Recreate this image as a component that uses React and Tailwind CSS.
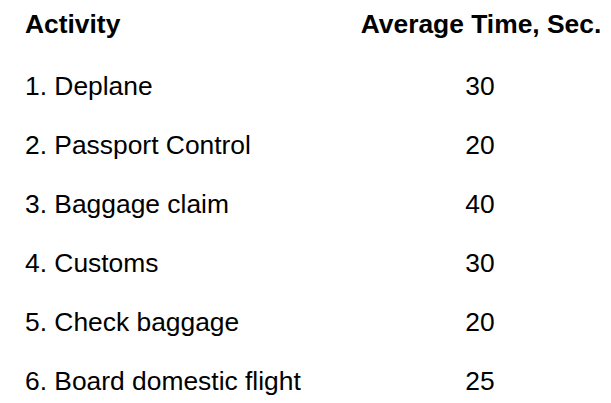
const rows = [
  { activity: "1. Deplane", time: 30 },
  { activity: "2. Passport Control", time: 20 },
  { activity: "3. Baggage claim", time: 40 },
  { activity: "4. Customs", time: 30 },
  { activity: "5. Check baggage", time: 20 },
  { activity: "6. Board domestic flight", time: 25 },
];

export default function App() {
  return (
    <div
      className="w-[611px] h-[403px] bg-white text-black pl-[25px] pt-[9.5px] overflow-hidden"
      style={{ fontFamily: '"Liberation Sans", Arial, sans-serif' }}
    >
      <div className="flex text-[26.4px] font-bold leading-[29px] mb-[18px]">
        <div className="w-[332px]">Activity</div>
        <div className="w-[248px] text-center whitespace-nowrap">Average Time, Sec.</div>
      </div>
      {rows.map((row) => (
        <div key={row.activity} className="flex text-[26.4px] leading-[59.2px] h-[59.2px]">
          <div className="w-[332px] whitespace-nowrap">{row.activity}</div>
          <div className="w-[246px] text-center">{row.time}</div>
        </div>
      ))}
    </div>
  );
}
